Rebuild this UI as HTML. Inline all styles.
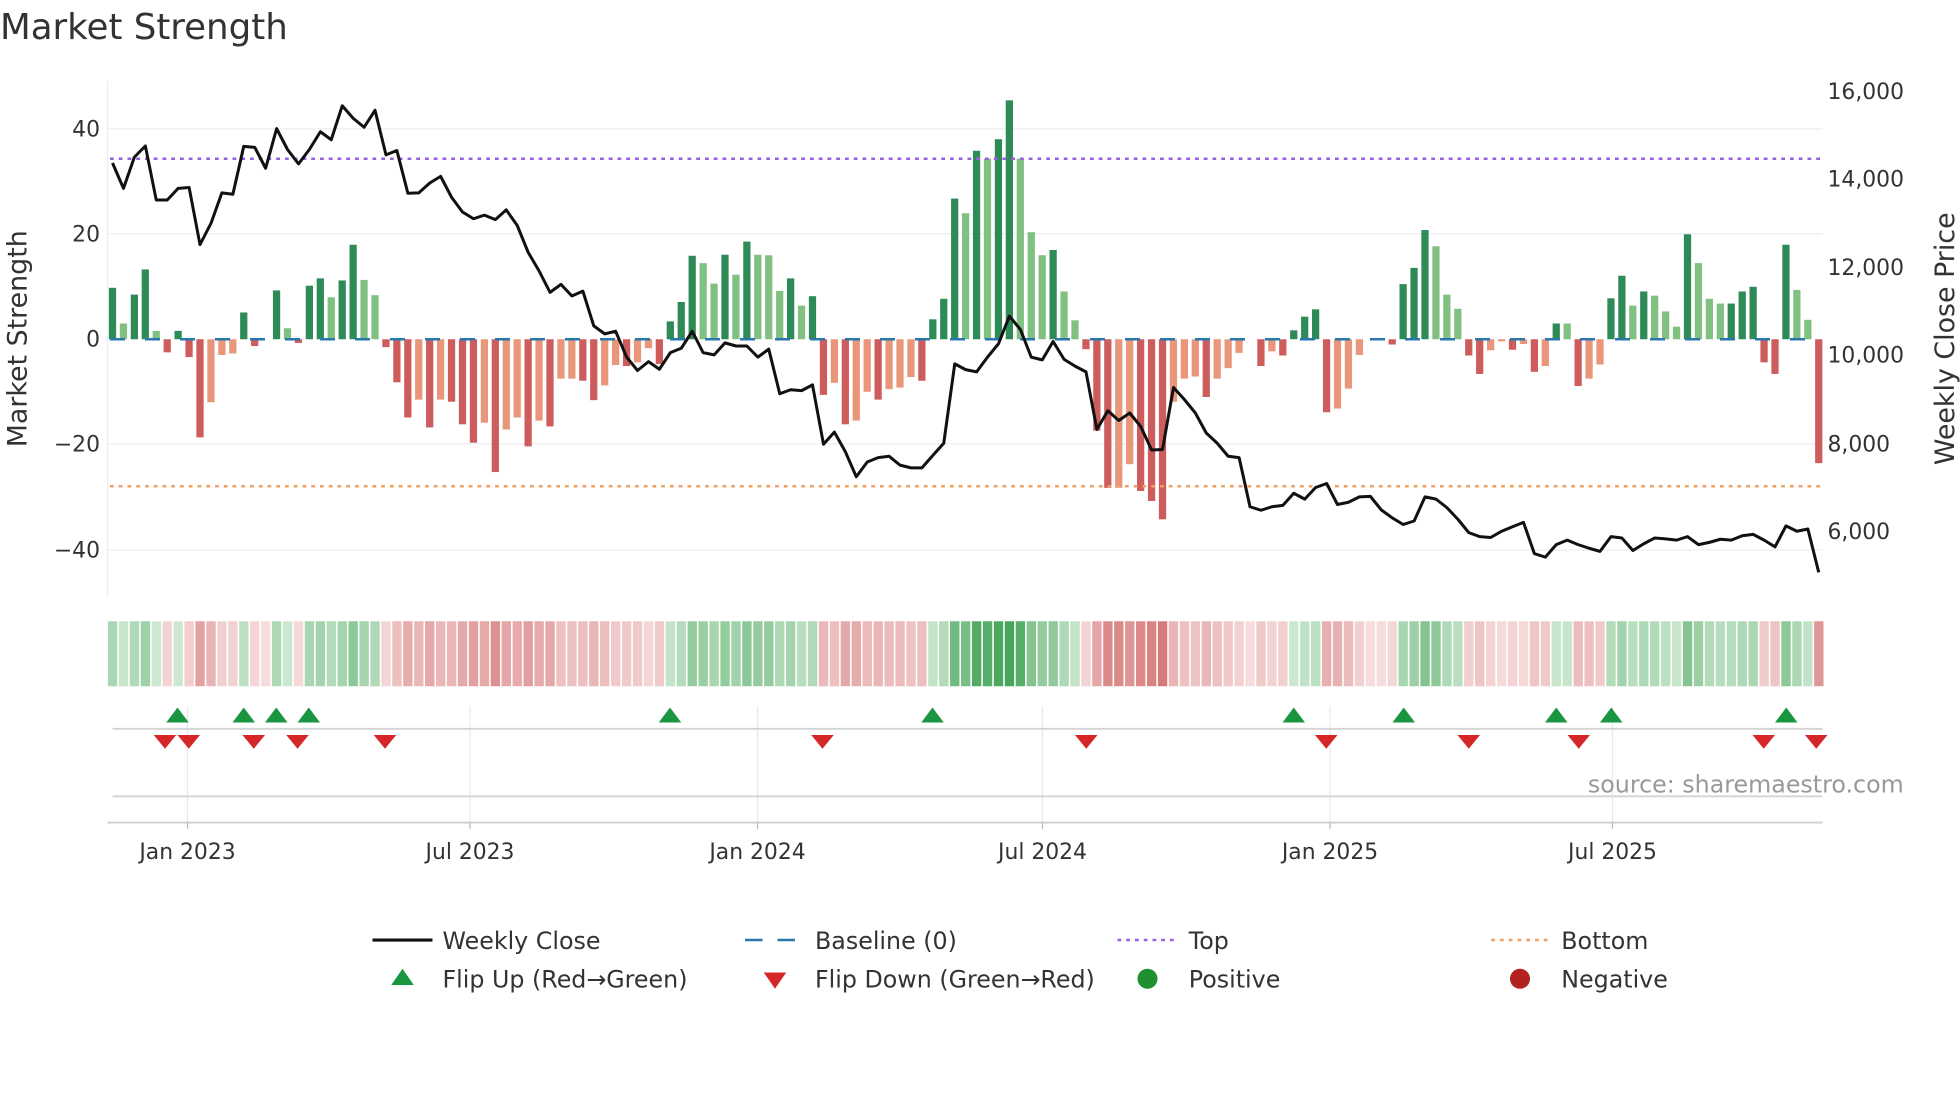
<!DOCTYPE html>
<html><head><meta charset="utf-8"><style>
html,body{margin:0;padding:0;background:#fff;width:1960px;height:1102px;overflow:hidden}
svg{display:block}
text{font-family:"DejaVu Sans","Liberation Sans",sans-serif;fill:#333}
</style></head><body>
<svg id="s" width="1960" height="1102" viewBox="0 0 1568 881.6" xmlns="http://www.w3.org/2000/svg">
<text x="0" y="31" font-size="28.5">Market Strength</text>
<g stroke="#eceef3" stroke-width="1">
<line x1="86" y1="103" x2="1458" y2="103"/><line x1="86" y1="187" x2="1458" y2="187"/>
<line x1="86" y1="355" x2="1458" y2="355"/><line x1="86" y1="440" x2="1458" y2="440"/>
<line x1="86" y1="65" x2="86" y2="478"/>
</g>
<g font-size="17.5" text-anchor="end">
<text x="80" y="109">40</text><text x="80" y="193">20</text><text x="80" y="277">0</text>
<text x="80" y="361">−20</text><text x="80" y="446">−40</text></g>
<g font-size="17.5">
<text x="1462" y="79">16,000</text><text x="1462" y="149">14,000</text><text x="1462" y="220">12,000</text>
<text x="1462" y="290">10,000</text><text x="1462" y="361">8,000</text><text x="1462" y="431">6,000</text></g>
<text transform="translate(21,271) rotate(-90)" font-size="21.5" text-anchor="middle">Market Strength</text>
<text transform="translate(1563,271) rotate(-90)" font-size="21.5" text-anchor="middle">Weekly Close Price</text>
<g id="bars"></g>
<line x1="88" y1="271.4" x2="1458" y2="271.4" stroke="#2a77ad" stroke-width="2" stroke-dasharray="12,16"/>
<line x1="88" y1="127" x2="1458" y2="127" stroke="#9b5fe0" stroke-width="2" stroke-dasharray="3,4"/>
<line x1="88" y1="389" x2="1458" y2="389" stroke="#f0a060" stroke-width="2" stroke-dasharray="3,4"/>
<polyline id="price" fill="none" stroke="#111" stroke-width="2.4" stroke-linejoin="round"/>
<g id="heat"></g>
<g stroke="#e6e9ee" stroke-width="1">
<line x1="150" y1="565" x2="150" y2="658"/><line x1="376" y1="565" x2="376" y2="658"/>
<line x1="606" y1="565" x2="606" y2="658"/><line x1="834" y1="565" x2="834" y2="658"/>
<line x1="1064" y1="565" x2="1064" y2="658"/><line x1="1290" y1="565" x2="1290" y2="658"/>
</g>
<line x1="90" y1="583" x2="1458" y2="583" stroke="#d4d4d4" stroke-width="1.5"/>
<line x1="90" y1="637" x2="1458" y2="637" stroke="#d4d4d4" stroke-width="1.5"/>
<line x1="86" y1="658" x2="1458" y2="658" stroke="#d0d0d0" stroke-width="1.5"/>
<g stroke="#bbb" stroke-width="1">
<line x1="150" y1="658" x2="150" y2="663"/><line x1="376" y1="658" x2="376" y2="663"/>
<line x1="606" y1="658" x2="606" y2="663"/><line x1="834" y1="658" x2="834" y2="663"/>
<line x1="1064" y1="658" x2="1064" y2="663"/><line x1="1290" y1="658" x2="1290" y2="663"/></g>
<g id="marks"></g>
<text x="1523" y="634" font-size="19" text-anchor="end" style="fill:#999">source: sharemaestro.com</text>
<g font-size="17.5" text-anchor="middle">
<text x="150" y="687">Jan 2023</text><text x="376" y="687">Jul 2023</text><text x="606" y="687">Jan 2024</text>
<text x="834" y="687">Jul 2024</text><text x="1064" y="687">Jan 2025</text><text x="1290" y="687">Jul 2025</text></g>
<g font-size="19">
<line x1="298" y1="752" x2="346" y2="752" stroke="#111" stroke-width="2.5"/>
<text x="354" y="759">Weekly Close</text>
<line x1="596" y1="752" x2="642" y2="752" stroke="#2a77ad" stroke-width="2" stroke-dasharray="14,12"/>
<text x="652" y="759">Baseline (0)</text>
<line x1="894" y1="752" x2="940" y2="752" stroke="#9b5fe0" stroke-width="2" stroke-dasharray="3,4"/>
<text x="951" y="759">Top</text>
<line x1="1193" y1="752" x2="1239" y2="752" stroke="#f0a060" stroke-width="2" stroke-dasharray="3,4"/>
<text x="1249" y="759">Bottom</text>
<polygon points="322,775 313,788 331,788" fill="#1a9641"/>
<text x="354" y="790">Flip Up (Red→Green)</text>
<polygon points="611,778 629,778 620,791" fill="#d62728"/>
<text x="652" y="790">Flip Down (Green→Red)</text>
<circle cx="918" cy="783" r="8" fill="#1f8f2f"/>
<text x="951" y="790">Positive</text>
<circle cx="1216" cy="783" r="8" fill="#b22222"/>
<text x="1249" y="790">Negative</text>
</g>
</svg>
<script>
var B=[[9.8,'d'],[3,'l'],[8.5,'d'],[13.3,'d'],[1.6,'l'],[-2.5,'r'],[1.6,'d'],[-3.4,'r'],[-18.7,'r'],[-12,'s'],[-3,'s'],[-2.7,'s'],[5.1,'d'],[-1.3,'r'],[0,'z'],[9.3,'d'],[2.1,'l'],[-0.7,'r'],[10.2,'d'],[11.6,'d'],[8,'l'],[11.2,'d'],[18,'d'],[11.3,'l'],[8.4,'l'],[-1.5,'r'],[-8.2,'r'],[-14.9,'r'],[-11.5,'s'],[-16.8,'r'],[-11.5,'s'],[-11.9,'r'],[-16.2,'r'],[-19.7,'r'],[-15.9,'s'],[-25.3,'r'],[-17.2,'s'],[-14.9,'s'],[-20.4,'r'],[-15.5,'s'],[-16.6,'r'],[-7.5,'s'],[-7.5,'s'],[-7.9,'r'],[-11.6,'r'],[-8.8,'s'],[-4.9,'s'],[-5.1,'r'],[-4.4,'s'],[-1.7,'s'],[-4.7,'r'],[3.4,'d'],[7.1,'d'],[15.9,'d'],[14.5,'l'],[10.6,'l'],[16.1,'d'],[12.3,'l'],[18.6,'d'],[16.1,'l'],[16,'l'],[9.2,'l'],[11.6,'d'],[6.4,'l'],[8.2,'d'],[-10.6,'r'],[-8.3,'s'],[-16.2,'r'],[-15.5,'s'],[-10,'s'],[-11.5,'r'],[-9.5,'s'],[-9.2,'s'],[-7.2,'s'],[-7.9,'r'],[3.8,'d'],[7.7,'d'],[26.8,'d'],[24,'l'],[35.9,'d'],
[34.4,'l'],[38.1,'d'],[45.5,'d'],[34.4,'l'],[20.4,'l'],[16,'l'],[17,'d'],[9.1,'l'],[3.6,'l'],[-1.9,'r'],[-17.4,'r'],[-28.3,'r'],[-28.3,'s'],[-23.8,'s'],[-28.9,'r'],[-30.8,'r'],[-34.3,'r'],[-11.9,'s'],[-7.5,'s'],[-7.1,'s'],[-11,'r'],[-7.5,'s'],[-5.5,'s'],[-2.6,'s'],[0,'z'],[-5.1,'r'],[-2.3,'s'],[-3.1,'r'],[1.7,'d'],[4.3,'d'],[5.7,'d'],[-13.9,'r'],[-13.2,'s'],[-9.4,'s'],[-3,'s'],[0,'z'],[0,'z'],[-1,'r'],[10.5,'d'],[13.6,'d'],[20.8,'d'],[17.7,'l'],[8.5,'l'],[5.8,'l'],[-3.1,'r'],[-6.6,'r'],[-2.1,'s'],[-0.4,'s'],[-2,'r'],[-0.9,'s'],[-6.2,'r'],[-5.1,'s'],[3,'d'],[3,'l'],[-8.9,'r'],[-7.5,'s'],[-4.8,'s'],[7.8,'d'],[12.1,'d'],[6.4,'l'],[9.1,'d'],[8.3,'l'],[5.3,'l'],[2.4,'l'],[20,'d'],[14.5,'l'],[7.7,'l'],[6.8,'l'],[6.8,'d'],[9.1,'d'],[10,'d'],[-4.4,'r'],[-6.6,'r'],[18,'d'],[9.4,'l'],[3.7,'l'],[-23.6,'r']];
var C={d:'#2e8b57',l:'#80c080',r:'#cd5c5c',s:'#e9967a'};
var P1=[365,422,352,327,448,448,422,420,548,500,432,435,328,330,377,288,335,367,335,295,313,237,265,285,247,347,337,433,432,410,395,442,475,490,482,492,470,505,565,607,655,637,663,652,730,748,742,800,830,810,827,790,780,742,790,795,768,775,775,800,782,882,873,875,862,995,968,1012,1068,1035,1025,1022,1042,1048,1048,1020,993,815,828,833];
var P2=[800,770,708,738,800,806,765,805,820,833,962,920,942,925,955,1008,1007,868,895,925,970,993,1022,1025,1135,1143,1135,1132,1105,1118,1092,1083,1130,1125,1113,1112,1142,1160,1175,1167,1113,1118,1137,1163,1193,1202,1204,1190,1180,1170,1240,1248,1220,1210,1220,1228,1235,1202,1205,1233,1218,1205,1207,1210,1202,1220,1215,1208,1210,1200,1197,1210,1225,1178,1190,1185,1282];
var P=P1.concat(P2);
var ns='http://www.w3.org/2000/svg';
function el(t,a,p){var e=document.createElementNS(ns,t);for(var k in a)e.setAttribute(k,a[k]);document.getElementById(p).appendChild(e);}
var pts=[];
for(var i=0;i<B.length;i++){
 var x=90+8.75*i,v=B[i][0];
 if(v!==0){var y0=271.4,y1=271.4-v*4.2;el('rect',{x:x-2.9,y:Math.min(y0,y1),width:5.8,height:Math.abs(y1-y0),fill:C[B[i][1]]},'bars');}
 var m=Math.min(Math.abs(v)/40,1),col,lo,hi;
 if(v>0||(v===0&&i>0&&B[i-1][0]>0)){lo=[214,237,217];hi=[70,165,90];}else{lo=[246,220,220];hi=[210,110,110];}
 var mm=Math.pow(m,0.85);
 col='rgb('+lo.map(function(c,j){return Math.round(c+(hi[j]-c)*mm)}).join(',')+')';
 el('rect',{x:x-3.7,y:497,width:7.5,height:52,fill:col},'heat');
 if(i<P.length)pts.push(x.toFixed(1)+','+(P[i]/2.8).toFixed(1));
}
document.getElementById('price').setAttribute('points',pts.join(' '));
[142,195,221,247,536,746,1035,1123,1245,1289,1429].forEach(function(x){el('polygon',{points:x+',566 '+(x-9)+',578 '+(x+9)+',578',fill:'#1a9641'},'marks');});
[132,151,203,238,308,658,869,1061,1175,1263,1411,1453].forEach(function(x){el('polygon',{points:(x-9)+',588 '+(x+9)+',588 '+x+',599',fill:'#d62728'},'marks');});
</script>
</body></html>
